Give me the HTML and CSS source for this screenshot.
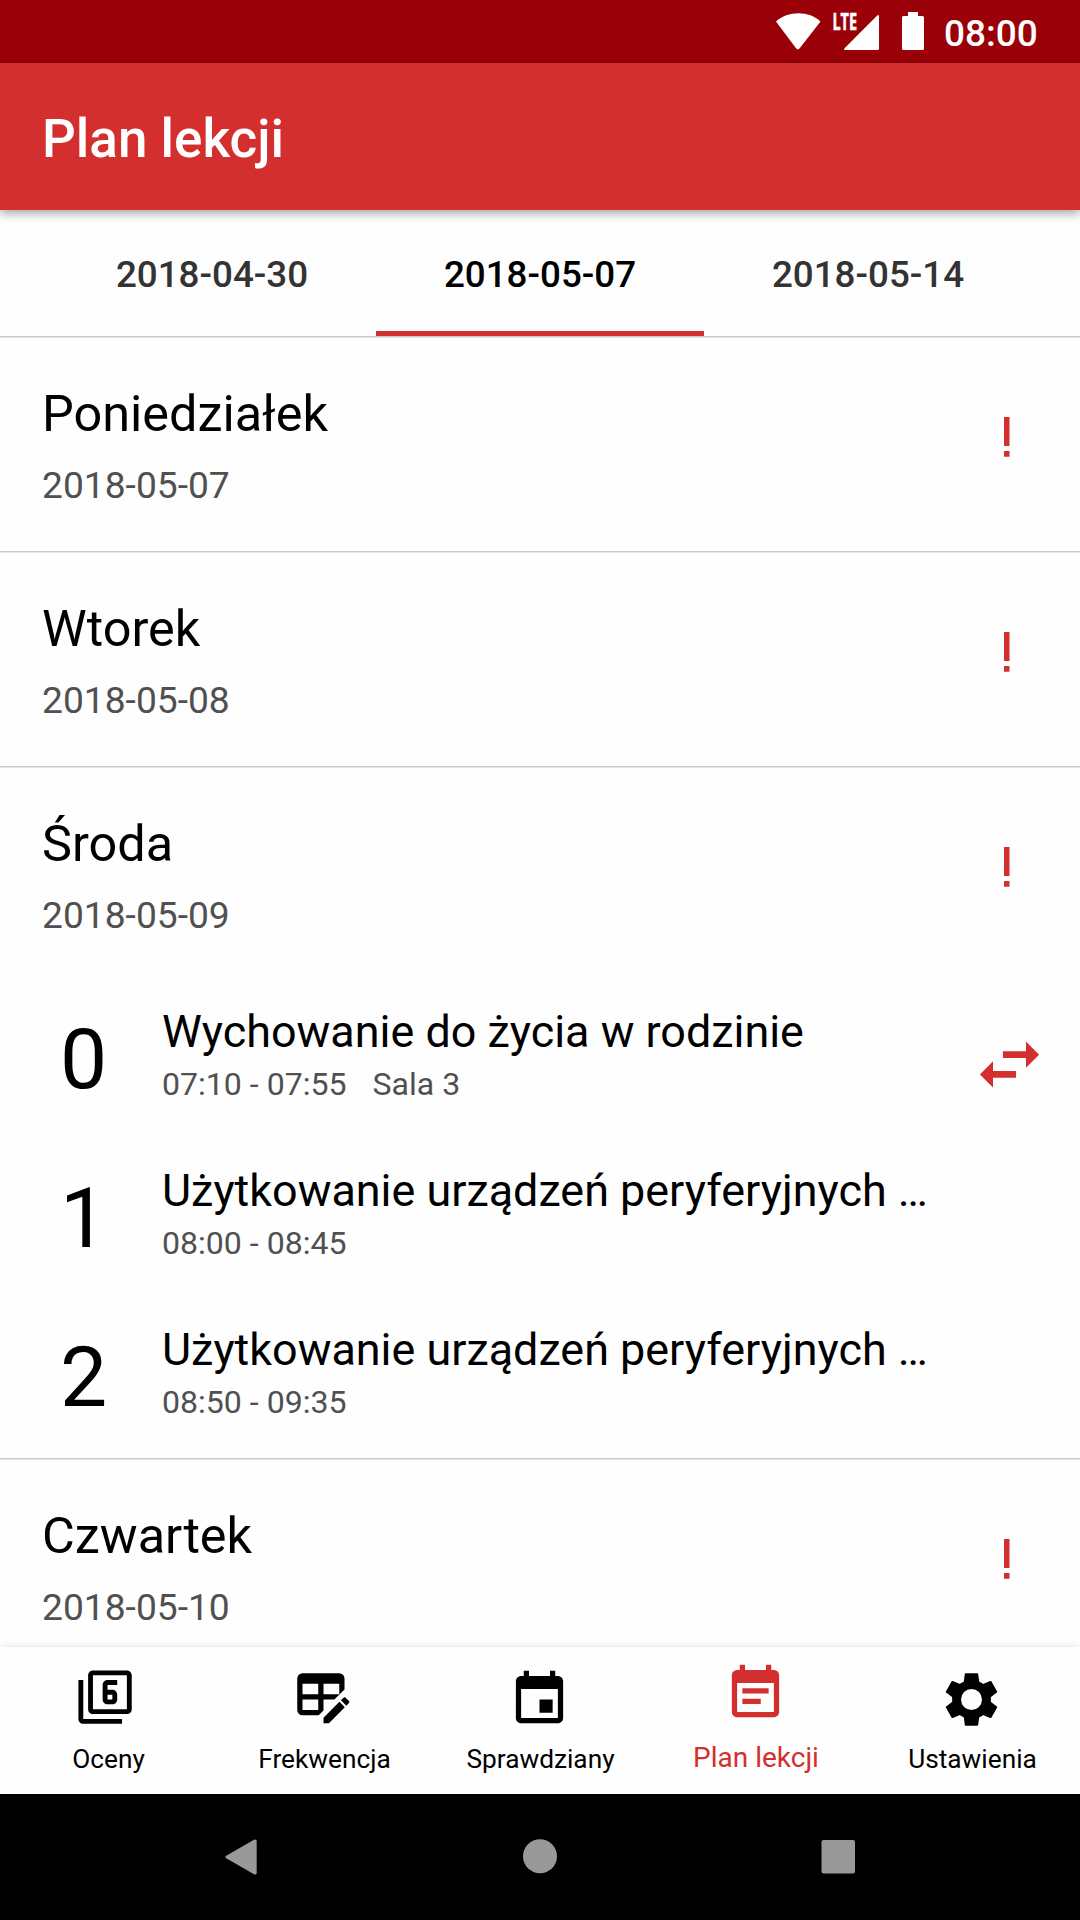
FILE: index.html
```html
<!DOCTYPE html>
<html lang="pl">
<head>
<meta charset="utf-8">
<title>Plan lekcji</title>
<link rel="stylesheet" href="styles.css">
</head>
<body>
<div class="screen">
  <div class="status-bar">
    <svg class="status-icons" viewBox="0 0 170 63">
      <path d="M6 21.500C17.500 10.500 39.500 10.500 50.500 21.500L29.700 48.300Q28 50.500 26 48.300Z"/>
      <path d="M107 15.800q2-2 2 .7V48.500q0 1.500-1.500 1.500H75.500q-2.500 0-.7-2Z"/>
      <path d="M138 12h10v4h4.500q1.500 0 1.500 1.500V48.500q0 1.500-1.500 1.500H133.500q-1.500 0-1.500-1.500V17.500q0-1.500 1.500-1.500H138Z"/>
      <text class="lte" x="62.500" y="29.700" textLength="24.500" lengthAdjust="spacingAndGlyphs">LTE</text>
    </svg>
    <span class="clock">08:00</span>
  </div>
  <header class="toolbar"><h1>Plan lekcji</h1></header>
  <nav class="tabs">
    <a class="tab">2018-04-30</a>
    <a class="tab tab-active">2018-05-07</a>
    <a class="tab">2018-05-14</a>
  </nav>
  <main class="days">
    <section class="day">
      <div class="day-head">
        <div><h2>Poniedziałek</h2><p class="date">2018-05-07</p></div>
        <svg class="alert" viewBox="0 0 6 40"><path d="M0 0h5.500v29H0zM0 34h5.500v5.700H0z"/></svg>
      </div>
    </section>
    <section class="day">
      <div class="day-head">
        <div><h2>Wtorek</h2><p class="date">2018-05-08</p></div>
        <svg class="alert" viewBox="0 0 6 40"><path d="M0 0h5.500v29H0zM0 34h5.500v5.700H0z"/></svg>
      </div>
    </section>
    <section class="day">
      <div class="day-head">
        <div><h2>Środa</h2><p class="date">2018-05-09</p></div>
        <svg class="alert" viewBox="0 0 6 40"><path d="M0 0h5.500v29H0zM0 34h5.500v5.700H0z"/></svg>
      </div>
      <div class="lesson">
        <span class="number">0</span>
        <div class="lesson-body">
          <h3>Wychowanie do życia w rodzinie</h3>
          <p class="meta"><span>07:10 - 07:55</span><span>Sala 3</span></p>
        </div>
        <svg class="swap" viewBox="0 0 24 24"><path d="M6.990 11L3 15l3.990 4v-3H14v-2H6.990v-3zM21 9l-3.990-4v3H10v2h7.010v3L21 9z"/></svg>
      </div>
      <div class="lesson">
        <span class="number">1</span>
        <div class="lesson-body">
          <h3>Użytkowanie urządzeń peryferyjnych …</h3>
          <p class="meta"><span>08:00 - 08:45</span></p>
        </div>
      </div>
      <div class="lesson">
        <span class="number">2</span>
        <div class="lesson-body">
          <h3>Użytkowanie urządzeń peryferyjnych …</h3>
          <p class="meta"><span>08:50 - 09:35</span></p>
        </div>
      </div>
    </section>
    <section class="day">
      <div class="day-head">
        <div><h2>Czwartek</h2><p class="date">2018-05-10</p></div>
        <svg class="alert" viewBox="0 0 6 40"><path d="M0 0h5.500v29H0zM0 34h5.500v5.700H0z"/></svg>
      </div>
    </section>
  </main>
  <nav class="bottom-nav">
    <a class="item">
      <svg viewBox="0 0 26 26"><path d="M3 5H1v16c0 1.100.9 2 2 2h16v-2H3V5zm18-4H7c-1.100 0-2 .9-2 2v14c0 1.100.9 2 2 2h14c1.100 0 2-.9 2-2V3c0-1.100-.9-2-2-2zm0 16H7V3h14v14zm-8-2h2c1.100 0 2-.89 2-2v-2c0-1.110-.9-2-2-2h-2V7h4V5h-4c-1.100 0-2 .89-2 2v6c0 1.110.9 2 2 2zm0-4h2v2h-2v-2z"/></svg>
      <span>Oceny</span>
    </a>
    <a class="item">
      <svg viewBox="0 0 24 24"><path d="M21.700,13.350L20.700,14.350L18.650,12.300L19.650,11.300C19.860,11.080 20.210,11.080 20.420,11.300L21.700,12.580C21.920,12.790 21.920,13.140 21.700,13.350M12,18.940L18.070,12.880L20.120,14.930L14.060,21H12V18.940M4,2H18A2,2 0 0,1 20,4V8.170L16.170,12H12V16.170L10.170,18H4A2,2 0 0,1 2,16V4A2,2 0 0,1 4,2M4,6V10H10V6H4M12,6V10H18V6H12M4,12V16H10V12H4Z"/></svg>
      <span>Frekwencja</span>
    </a>
    <a class="item">
      <svg viewBox="0 0 24 24"><path d="M17 12h-5v5h5v-5zM16 1v2H8V1H6v2H5c-1.110 0-1.990.9-1.990 2L3 19c0 1.100.89 2 2 2h14c1.100 0 2-.9 2-2V5c0-1.100-.9-2-2-2h-1V1h-2zm3 18H5V8h14v11z"/></svg>
      <span>Sprawdziany</span>
    </a>
    <a class="item item-active">
      <svg viewBox="0 0 24 24"><path d="M14 14H7v2h7v-2zm5 5H5V8h14v11zm0-16h-1V1h-2v2H8V1H6v2H5c-1.110 0-2 .9-2 2v14c0 1.100.89 2 2 2h14c1.100 0 2-.9 2-2V5c0-1.100-.9-2-2-2zm-2 7H7v2h10v-2z"/></svg>
      <span>Plan lekcji</span>
    </a>
    <a class="item">
      <svg viewBox="0 0 24 24">
        <path fill-rule="evenodd" d="M12 4.600a7.400 7.400 0 1 1 0 14.800 7.400 7.400 0 0 1 0-14.800zm0 3.400a4 4 0 1 0 0 8 4 4 0 0 0 0-8z"/>
        <path id="tooth" d="M9.800 2h4.400q.3 0 .35.3l.55 4.200H8.900l.55-4.200q.05-.3.35-.3z"/>
        <use href="#tooth" transform="rotate(60 12 12)"/>
        <use href="#tooth" transform="rotate(120 12 12)"/>
        <use href="#tooth" transform="rotate(180 12 12)"/>
        <use href="#tooth" transform="rotate(240 12 12)"/>
        <use href="#tooth" transform="rotate(300 12 12)"/>
      </svg>
      <span>Ustawienia</span>
    </a>
  </nav>
  <div class="system-nav">
    <svg viewBox="0 0 36 36"><path d="M1.200 16.800L29 .8Q31.700-.2 31.700 2V34Q31.700 36.200 29 35.200L1.200 19.200Q-.5 18 1.200 16.800Z"/></svg>
    <svg viewBox="0 0 36 36"><circle cx="17" cy="17.300" r="17"/></svg>
    <svg viewBox="0 0 36 36"><rect x="1.500" y="1" width="33.500" height="33.500" rx="2"/></svg>
  </div>
</div>
</body>
</html>
```

FILE: styles.css
```css
* { box-sizing: border-box; margin: 0; padding: 0; }
body { font-family: Roboto, sans-serif; background: #fefefe; color: #000; }
svg { display: block; flex: none; }
.screen { width: 1080px; height: 1920px; display: flex; flex-direction: column; overflow: hidden; }

.status-bar { height: 63px; flex: none; background: #9a0007; display: flex; padding-left: 770px; }
.status-icons { width: 170px; height: 63px; fill: #fff; }
.lte { font: 700 22.5px "Open Sans", sans-serif; stroke: #fff; stroke-width: .6px; }
.clock { color: #fff; font-size: 37px; font-weight: 500; line-height: 67px; margin-left: 4px; }

.toolbar { height: 147px; flex: none; background: #d32f2f; padding: 5px 42px 0; box-shadow: 0 3px 10px rgba(0, 0, 0, .38); z-index: 2; }
.toolbar h1 { color: #fff; font-size: 53px; font-weight: 500; line-height: 143px; }

.tabs { height: 126px; flex: none; display: flex; justify-content: center; }
.tab { width: 328px; text-align: center; font-size: 36.75px; font-weight: 500; line-height: 129px; color: #333; }
.tab-active { color: #000; border-bottom: 5px solid #d32f2f; }

.days { flex: 1; min-height: 0; overflow: hidden; }
.day { border-top: 1px solid #c8c8c8; box-shadow: inset 0 1px #e6e6e6; padding-top: 1px; }
.day-head { height: 213px; padding: 46px 70px 0 42px; display: flex; justify-content: space-between; }
.day h2 { font-size: 50.4px; font-weight: 400; line-height: 60px; }
.date { font-size: 37.2px; line-height: 44px; margin-top: 19px; color: #505050; }
.alert { width: 6px; height: 40px; margin-top: 33px; fill: #d32f2f; }

.lesson { height: 159px; padding: 0 31px 0 42px; display: flex; }
.number { width: 83px; margin-top: 28px; font-size: 84px; line-height: 101px; text-align: center; }
.lesson-body { flex: 1; margin: 25px 0 0 37px; }
.lesson h3 { font-size: 44.9px; font-weight: 400; line-height: 52px; white-space: nowrap; }
.meta { display: flex; gap: 26px; margin-top: 7px; font-size: 32.1px; line-height: 38px; color: #505050; }
.swap { width: 79px; height: 79px; margin-top: 44px; fill: #d32f2f; }

.bottom-nav { height: 147px; flex: none; display: flex; background: #fefefe; box-shadow: 0 0 8px rgba(0, 0, 0, .12); z-index: 1; }
.item { width: 216px; padding-top: 21px; display: flex; flex-direction: column; align-items: center; font-size: 26.25px; }
.item svg { width: 63px; height: 63px; margin-right: 2px; fill: currentColor; }
.item span { line-height: 32px; margin: 12px 0 0 1px; }
.item-active { padding-top: 15px; color: #d32f2f; font-size: 28px; }
.item-active span { margin: 17px 0 0; }

.system-nav { height: 126px; flex: none; z-index: 2; background: #000; display: flex; justify-content: space-between; padding: 45px 224px 0 225px; }
.system-nav svg { width: 36px; height: 36px; fill: #999; }
```
